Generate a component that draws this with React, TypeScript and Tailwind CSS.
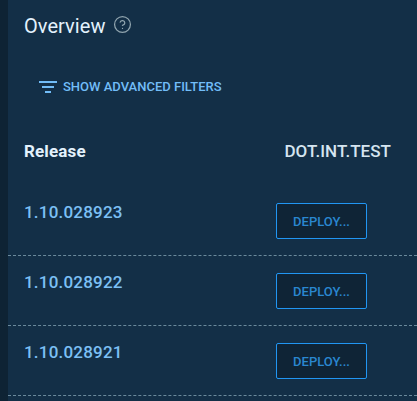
import { CircleHelp } from "lucide-react";

const releases = ["1.10.028923", "1.10.028922", "1.10.028921"];

export default function App() {
  return (
    <div className="flex h-[401px] w-[417px] overflow-hidden bg-[#132f47] font-['Roboto',sans-serif]">
      <div className="w-2 shrink-0 bg-[#0e2334]" />
      <main className="min-w-0 flex-1">
        <div className="flex h-[52px] items-center gap-[8px] pl-4 pb-[1px]">
          <span className="text-[20px] leading-none tracking-[0.05px] text-[#e3f2fd]">Overview</span>
          <CircleHelp className="mb-[3px] size-[19px] text-[#90a4ae]" strokeWidth={1.6} />
        </div>

        <div className="mt-[17px] flex h-[36px] items-center pl-[31px]">
          <svg width="18" height="14" viewBox="0 0 18 14" className="mr-[6px] mt-[1px] text-[#72bdf8]" fill="currentColor">
            <rect x="0" y="0" width="18" height="2" />
            <rect x="3" y="5" width="12" height="2" />
            <rect x="6" y="10" width="6" height="2" />
          </svg>
          <span className="text-[13px] font-medium text-[#72bdf8]">SHOW ADVANCED FILTERS</span>
        </div>

        <div className="mb-[11px] mt-[24px] flex h-[46px] items-center justify-between pl-4 pr-[26px]">
          <span className="text-[17px] font-bold tracking-[0.15px] text-[#e3f2fd]">Release</span>
          <span className="text-[17px] font-medium tracking-[0.05px] text-[#d5e5f0]">DOT.INT.TEST</span>
        </div>

        {releases.map((release) => (
          <div key={release} className="flex h-[70px] border-b border-dashed border-[#6b8a9c] pl-4 pr-[50px]">
            <span className="mt-[14px] text-[17px] font-medium leading-[24px] tracking-[0.2px] text-[#7cc0f5]">{release}</span>
            <button className="ml-auto mt-[17px] flex h-[36px] w-[91px] items-center justify-center rounded-[2px] border border-[#2196f3] bg-[#0f2436] pt-px text-[13px] font-medium text-[#2a87d0]">
              DEPLOY...
            </button>
          </div>
        ))}
      </main>
    </div>
  );
}
